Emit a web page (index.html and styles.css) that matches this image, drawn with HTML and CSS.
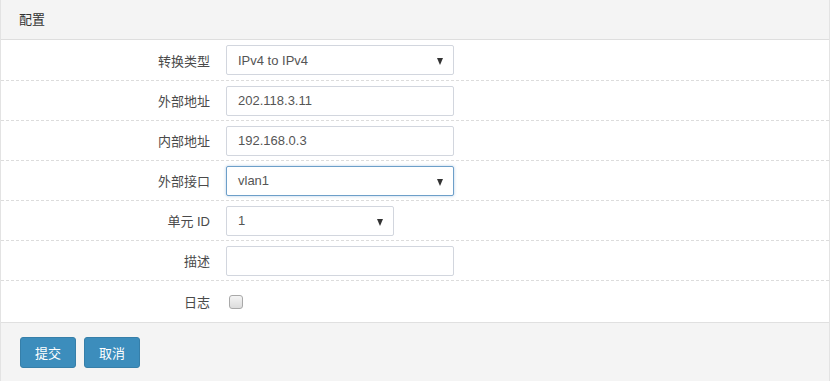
FILE: index.html
```html
<!DOCTYPE html>
<html lang="zh-CN">
<head>
  <meta charset="UTF-8">
  <title>配置</title>
  <link rel="stylesheet" href="styles.css">
</head>
<body>
  <div class="panel">
    <div class="panel-head">配置</div>

    <form class="panel-body">
      <div class="row">
        <label>转换类型</label>
        <div class="select wide"><span>IPv4 to IPv4</span></div>
      </div>
      <div class="row">
        <label>外部地址</label>
        <input class="field wide" type="text" value="202.118.3.11">
      </div>
      <div class="row">
        <label>内部地址</label>
        <input class="field wide" type="text" value="192.168.0.3">
      </div>
      <div class="row">
        <label>外部接口</label>
        <div class="select wide focused"><span>vlan1</span></div>
      </div>
      <div class="row">
        <label>单元 ID</label>
        <div class="select narrow"><span>1</span></div>
      </div>
      <div class="row">
        <label>描述</label>
        <input class="field wide" type="text" value="">
      </div>
      <div class="row last">
        <label>日志</label>
        <span class="check"></span>
      </div>
    </form>

    <div class="panel-foot">
      <button class="btn">提交</button>
      <button class="btn">取消</button>
    </div>
  </div>
</body>
</html>
```

FILE: styles.css
```css
body {
  margin: 0;
  font-family: "Liberation Sans", "Noto Sans CJK SC", Arial, sans-serif;
  font-size: 13px;
  color: #333;
  background: #fff;
}

.panel {
  border: 1px solid #e3e3e3;
  border-top: none;
  height: 381px;
  box-sizing: border-box;
  display: flex;
  flex-direction: column;
}

.panel-head {
  height: 39px;
  line-height: 39px;
  padding-left: 18px;
  background: #f4f4f4;
  border-bottom: 1px solid #dedede;
  color: #333;
}

.panel-body {
  margin: 0;
}

.row {
  display: grid;
  grid-template-columns: 209px 1fr;
  column-gap: 16px;
  align-items: center;
  height: 40px;
  border-bottom: 1px dashed #dcdcdc;
}

.row + .row {
  height: 39px;
}

.row.last {
  border-bottom: none;
  height: 41px;
}

.row label {
  text-align: right;
  color: #4a4a4a;
}

.field,
.select {
  box-sizing: border-box;
  height: 30px;
  border: 1px solid #d2d6de;
  border-radius: 2px;
  background: #fff;
  font: inherit;
  color: #555;
  padding: 0 11px;
}

.wide {
  width: 228px;
}

.narrow {
  width: 168px;
}

.field {
  outline: none;
}

.select {
  position: relative;
  display: flex;
  align-items: center;
}

.select::after {
  content: "";
  position: absolute;
  right: 10px;
  top: 12px;
  border-left: 3.5px solid transparent;
  border-right: 3.5px solid transparent;
  border-top: 7px solid #333;
}

.select.focused {
  border-color: #6d9fc9;
  box-shadow: 0 0 3px rgba(102, 153, 204, 0.5);
}

.check {
  display: inline-block;
  width: 12px;
  height: 12px;
  margin-left: 3px;
  border: 1px solid #a9a9a9;
  border-radius: 3px;
  background: linear-gradient(#f4f4f4, #dcdcdc);
}

.panel-foot {
  flex: 1;
  background: #f4f4f4;
  border-top: 1px solid #e0e0e0;
  padding: 14px 19px;
  display: flex;
  align-items: flex-start;
  gap: 8px;
}

.btn {
  width: 56px;
  height: 31px;
  border: 1px solid #367fa9;
  border-radius: 3px;
  background: #3c8dbc;
  color: #fff;
  font: inherit;
  padding: 0;
}
```
